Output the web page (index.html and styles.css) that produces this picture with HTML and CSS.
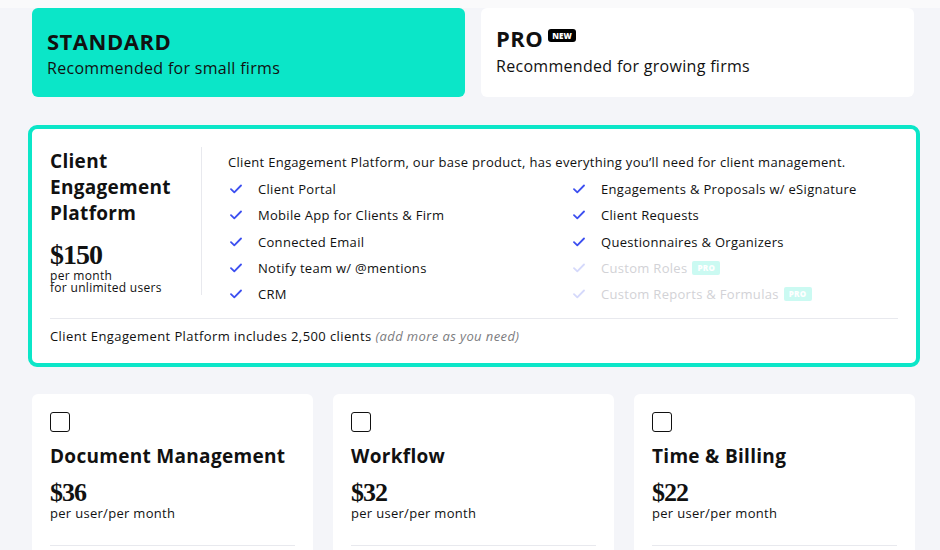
FILE: index.html
```html
<!DOCTYPE html>
<html>
<head>
<meta charset="utf-8">
<link rel="stylesheet" href="styles.css">
</head>
<body>
<div class="topstrip"></div>
<div class="page">
  <div class="tiers">
    <div class="tier tier-active">
      <div class="tier-name">STANDARD</div>
      <div class="tier-sub">Recommended for small firms</div>
    </div>
    <div class="tier tier-pro">
      <div class="tier-name">PRO <span class="new-badge">NEW</span></div>
      <div class="tier-sub">Recommended for growing firms</div>
    </div>
  </div>

  <div class="main-card">
    <div class="main-top">
      <div class="main-left">
        <div class="main-title">Client<br>Engagement<br>Platform</div>
        <div class="price">$150</div>
        <div class="price-note">per month</div>
        <div class="price-note">for unlimited users</div>
      </div>
      <div class="main-right">
        <div class="desc">Client Engagement Platform, our base product, has everything you’ll need for client management.</div>
        <div class="features">
          <div class="feat"><span class="chk"><svg viewBox="0 0 12 10" width="12" height="10"><path d="M1 5.2 L4.3 8.3 L11 1.5" fill="none" stroke="currentColor" stroke-width="1.8" stroke-linecap="round" stroke-linejoin="round"/></svg></span>Client Portal</div>
          <div class="feat"><span class="chk"><svg viewBox="0 0 12 10" width="12" height="10"><path d="M1 5.2 L4.3 8.3 L11 1.5" fill="none" stroke="currentColor" stroke-width="1.8" stroke-linecap="round" stroke-linejoin="round"/></svg></span>Engagements &amp; Proposals w/ eSignature</div>
          <div class="feat"><span class="chk"><svg viewBox="0 0 12 10" width="12" height="10"><path d="M1 5.2 L4.3 8.3 L11 1.5" fill="none" stroke="currentColor" stroke-width="1.8" stroke-linecap="round" stroke-linejoin="round"/></svg></span>Mobile App for Clients &amp; Firm</div>
          <div class="feat"><span class="chk"><svg viewBox="0 0 12 10" width="12" height="10"><path d="M1 5.2 L4.3 8.3 L11 1.5" fill="none" stroke="currentColor" stroke-width="1.8" stroke-linecap="round" stroke-linejoin="round"/></svg></span>Client Requests</div>
          <div class="feat"><span class="chk"><svg viewBox="0 0 12 10" width="12" height="10"><path d="M1 5.2 L4.3 8.3 L11 1.5" fill="none" stroke="currentColor" stroke-width="1.8" stroke-linecap="round" stroke-linejoin="round"/></svg></span>Connected Email</div>
          <div class="feat"><span class="chk"><svg viewBox="0 0 12 10" width="12" height="10"><path d="M1 5.2 L4.3 8.3 L11 1.5" fill="none" stroke="currentColor" stroke-width="1.8" stroke-linecap="round" stroke-linejoin="round"/></svg></span>Questionnaires &amp; Organizers</div>
          <div class="feat"><span class="chk"><svg viewBox="0 0 12 10" width="12" height="10"><path d="M1 5.2 L4.3 8.3 L11 1.5" fill="none" stroke="currentColor" stroke-width="1.8" stroke-linecap="round" stroke-linejoin="round"/></svg></span>Notify team w/ @mentions</div>
          <div class="feat feat-off"><span class="chk"><svg viewBox="0 0 12 10" width="12" height="10"><path d="M1 5.2 L4.3 8.3 L11 1.5" fill="none" stroke="currentColor" stroke-width="1.8" stroke-linecap="round" stroke-linejoin="round"/></svg></span>Custom Roles<span class="pro-badge">PRO</span></div>
          <div class="feat"><span class="chk"><svg viewBox="0 0 12 10" width="12" height="10"><path d="M1 5.2 L4.3 8.3 L11 1.5" fill="none" stroke="currentColor" stroke-width="1.8" stroke-linecap="round" stroke-linejoin="round"/></svg></span>CRM</div>
          <div class="feat feat-off"><span class="chk"><svg viewBox="0 0 12 10" width="12" height="10"><path d="M1 5.2 L4.3 8.3 L11 1.5" fill="none" stroke="currentColor" stroke-width="1.8" stroke-linecap="round" stroke-linejoin="round"/></svg></span>Custom Reports &amp; Formulas<span class="pro-badge">PRO</span></div>
        </div>
      </div>
    </div>
    <div class="main-foot">Client Engagement Platform includes 2,500 clients <em>(add more as you need)</em></div>
  </div>

  <div class="addons">
    <div class="addon">
      <div class="box"></div>
      <div class="addon-title">Document Management</div>
      <div class="addon-price">$36</div>
      <div class="addon-note">per user/per month</div>
      <div class="addon-rule"></div>
    </div>
    <div class="addon">
      <div class="box"></div>
      <div class="addon-title">Workflow</div>
      <div class="addon-price">$32</div>
      <div class="addon-note">per user/per month</div>
      <div class="addon-rule"></div>
    </div>
    <div class="addon">
      <div class="box"></div>
      <div class="addon-title">Time &amp; Billing</div>
      <div class="addon-price">$22</div>
      <div class="addon-note">per user/per month</div>
      <div class="addon-rule"></div>
    </div>
  </div>
</div>
</body>
</html>
```
FILE: styles.css
```css
* { box-sizing: border-box; }
html, body { margin: 0; padding: 0; }
body {
  background: #f4f5f9;
  font-family: "Open Sans", "Liberation Sans", sans-serif;
  color: #111;
  width: 940px;
  height: 550px;
  overflow: hidden;
  letter-spacing: 0.3px;
}
.topstrip { height: 8px; background: #fafafb; margin-bottom: -8px; }
.page { padding: 8px 0 0 28px; width: 924px; }
.tiers { display: flex; gap: 16px; padding-left: 4px; }
.tier {
  width: 433px; height: 89px; background: #fff; border-radius: 6px;
  padding: 19px 15px 0 15px;
}
.tier-pro { padding-top: 16px; }
.tier-active { background: #0be6c8; }
.tier-name { font-size: 22px; font-weight: 700; line-height: 28px; display: flex; align-items: center; letter-spacing: 0.5px; }
.new-badge {
  background: #000; color: #fff; font-size: 8px; font-weight: 800;
  border-radius: 3px; padding: 2px 4px; margin-left: 5px; line-height: 9px;
  margin-top: -6px; letter-spacing: 0;
}
.tier-sub { font-size: 16px; line-height: 20px; margin-top: 3px; }
.tier-pro .tier-sub { margin-top: 4px; }

.main-card {
  margin-top: 28px; width: 892px; height: 242px;
  background: #fff; border: 4px solid #0be6c8; border-radius: 9px;
  padding: 18px 18px 0 18px;
}
.main-top { display: flex; }
.main-left { width: 152px; border-right: 1px solid #e8e9ee; height: 148px; padding-top: 1px; }
.main-title { font-size: 19px; font-weight: 700; line-height: 26px; }
.price { font-family: "Liberation Serif", "DejaVu Serif", serif; font-weight: 700; font-size: 28px; line-height: 24px; margin-top: 17px; letter-spacing: -1px; }
.price-note { font-size: 12px; line-height: 12px; }
.price + .price-note { margin-top: 3px; }
.main-right { padding-left: 26px; flex: 1; padding-top: 6px; }
.desc { font-size: 13px; line-height: 18px; }
.features { display: grid; grid-template-columns: 343px 1fr; grid-auto-rows: 26.3px; margin-top: 5px; }
.feat { font-size: 13px; display: flex; align-items: center; }
.chk { color: #3c4ff0; width: 30px; padding-left: 2px; display: flex; }
.feat-off { color: #d2d2d6; }
.feat-off .chk { color: #d5d9fb; }
.pro-badge {
  background: #cbfaf2; color: #fff; font-size: 8px; font-weight: 800;
  border-radius: 2px; padding: 2px 5px; margin-left: 5px; line-height: 10px;
}
.main-foot {
  margin-top: 11px; border-top: 1px solid #e8e9ee; padding-top: 8px;
  font-size: 13px; line-height: 18px; letter-spacing: 0.4px;
}
.main-foot em { color: #7c7c80; }

.addons { display: flex; gap: 20px; margin-top: 27px; padding-left: 4px; }
.addon {
  width: 281px; height: 170px; background: #fff; border-radius: 6px;
  padding: 18px 18px 0 18px;
}
.box { width: 20px; height: 20px; border: 1.5px solid #111; border-radius: 3px; }
.addon-title { font-size: 19px; font-weight: 700; line-height: 26px; margin-top: 11px; }
.addon-price { font-family: "Liberation Serif", "DejaVu Serif", serif; font-weight: 700; font-size: 26px; line-height: 22px; margin-top: 13px; letter-spacing: -1px; }
.addon-note { font-size: 13px; line-height: 16px; margin-top: 1px; }
.addon-rule { border-top: 1px solid #e8e9ee; margin-top: 24px; }
```
